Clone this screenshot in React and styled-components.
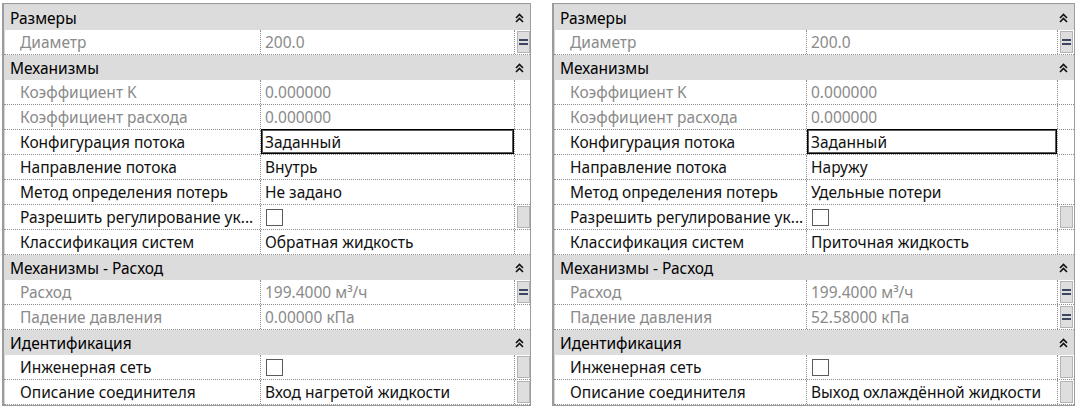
import React from 'react';
import styled, { createGlobalStyle } from 'styled-components';

const GlobalStyle = createGlobalStyle`
    html, body {
        margin: 0;
        padding: 0;
        background: #fff;
    }
    body {
        font-family: "Noto Sans", "Open Sans", sans-serif;
    }
`;

const leftRows = [
    { header: 'Размеры' },
    { label: 'Диаметр', value: '200.0', disabled: true, btn: 'eq' },
    { header: 'Механизмы' },
    { label: 'Коэффициент K', value: '0.000000', disabled: true },
    { label: 'Коэффициент расхода', value: '0.000000', disabled: true },
    { label: 'Конфигурация потока', value: 'Заданный', selected: true },
    { label: 'Направление потока', value: 'Внутрь' },
    { label: 'Метод определения потерь', value: 'Не задано' },
    { label: 'Разрешить регулирование ук...', check: true, btn: 'empty' },
    { label: 'Классификация систем', value: 'Обратная жидкость' },
    { header: 'Механизмы - Расход' },
    { label: 'Расход', value: '199.4000 м³/ч', disabled: true, btn: 'eq' },
    { label: 'Падение давления', value: '0.00000 кПа', disabled: true },
    { header: 'Идентификация' },
    { label: 'Инженерная сеть', check: true, btn: 'empty' },
    { label: 'Описание соединителя', value: 'Вход нагретой жидкости', btn: 'empty' },
];

const rightRows = [
    { header: 'Размеры' },
    { label: 'Диаметр', value: '200.0', disabled: true, btn: 'eq' },
    { header: 'Механизмы' },
    { label: 'Коэффициент K', value: '0.000000', disabled: true },
    { label: 'Коэффициент расхода', value: '0.000000', disabled: true },
    { label: 'Конфигурация потока', value: 'Заданный', selected: true },
    { label: 'Направление потока', value: 'Наружу' },
    { label: 'Метод определения потерь', value: 'Удельные потери' },
    { label: 'Разрешить регулирование ук...', check: true, btn: 'empty' },
    { label: 'Классификация систем', value: 'Приточная жидкость' },
    { header: 'Механизмы - Расход' },
    { label: 'Расход', value: '199.4000 м³/ч', disabled: true, btn: 'eq' },
    { label: 'Падение давления', value: '52.58000 кПа', disabled: true, btn: 'eq' },
    { header: 'Идентификация' },
    { label: 'Инженерная сеть', check: true, btn: 'empty' },
    { label: 'Описание соединителя', value: 'Выход охлаждённой жидкости', btn: 'empty' },
];

const Page = styled.div`
    display: flex;
    gap: 21px;
    padding: 3px 0 0 2px;
`;

const Panel = styled.div`
    border: 1px solid #9c9c9c;
    border-left-width: 2px;
    box-shadow: inset 1px 1px 0 #d6d6d6;
    display: flex;
    flex-direction: column;
    padding-top: 1px;
    color: #000;
`;

const HeaderRow = styled.div`
    height: 25px;
    background: #dcdcdc;
    display: flex;
    align-items: center;
    justify-content: space-between;
    padding: 0 6px 0 6px;
    font-size: 15.5px;
`;

const Row = styled.div`
    height: 25px;
    box-sizing: border-box;
    display: grid;
    grid-template-columns: ${p => p.$cols};
    border-bottom: 1px dotted #8e8e8e;
    font-size: 15.5px;
`;

const Label = styled.div`
    padding-left: 16px;
    border-right: 1px dotted #8e8e8e;
    display: flex;
    align-items: center;
    white-space: nowrap;
    overflow: hidden;
    color: ${p => (p.$disabled ? '#8a8a8a' : '#111')};
`;

const Value = styled.div`
    padding-left: 4px;
    border-right: 1px dotted #8e8e8e;
    display: flex;
    align-items: center;
    white-space: nowrap;
    color: ${p => (p.$disabled ? '#8a8a8a' : '#111')};
    box-shadow: ${p => (p.$selected ? 'inset 0 0 0 1px #000, inset 0 0 0 2px #5a5a5a' : 'none')};
    margin-top: ${p => (p.$selected ? '-1px' : '0')};
`;

const BtnCell = styled.div`
    display: flex;
    align-items: center;
    justify-content: center;
`;

const SideButton = styled.div`
    width: 11px;
    height: 20px;
    background: #dedede;
    border: 1px solid #b4b4b4;
    display: flex;
    flex-direction: column;
    align-items: center;
    justify-content: center;
    gap: 2px;
    margin-left: 1px;
`;

const EqLine = styled.span`
    display: block;
    width: 9px;
    height: 2px;
    background: #3c4660;
`;

const CheckBox = styled.span`
    display: inline-block;
    width: 15px;
    height: 15px;
    border: 1px solid #5a5a5a;
    background: #fff;
    margin-left: 1px;
`;

const Collapse = () => (
    <svg width="9" height="10" viewBox="0 0 9 10">
        <polyline points="1,5 4.5,1.5 8,5" fill="none" stroke="#111" strokeWidth="1.6" />
        <polyline points="1,9 4.5,5.5 8,9" fill="none" stroke="#111" strokeWidth="1.6" />
    </svg>
);

function Grid({ rows, cols }) {
    return (
        <Panel>
            {rows.map((r, i) => {
                if (r.header) {
                    return (
                        <HeaderRow key={i}>
                            <span>{r.header}</span>
                            <Collapse />
                        </HeaderRow>
                    );
                }
                return (
                    <Row key={i} $cols={cols}>
                        <Label $disabled={r.disabled}>{r.label}</Label>
                        <Value $disabled={r.disabled} $selected={r.selected}>
                            {r.check ? <CheckBox /> : r.value}
                        </Value>
                        <BtnCell>
                            {r.btn === 'eq' && (
                                <SideButton>
                                    <EqLine />
                                    <EqLine />
                                </SideButton>
                            )}
                            {r.btn === 'empty' && <SideButton />}
                        </BtnCell>
                    </Row>
                );
            })}
        </Panel>
    );
}

export default function App() {
    return (
        <>
            <GlobalStyle />
            <Page>
                <Grid rows={leftRows} cols="257px 254px 15px" />
                <Grid rows={rightRows} cols="253px 251px 16px" />
            </Page>
        </>
    );
}
